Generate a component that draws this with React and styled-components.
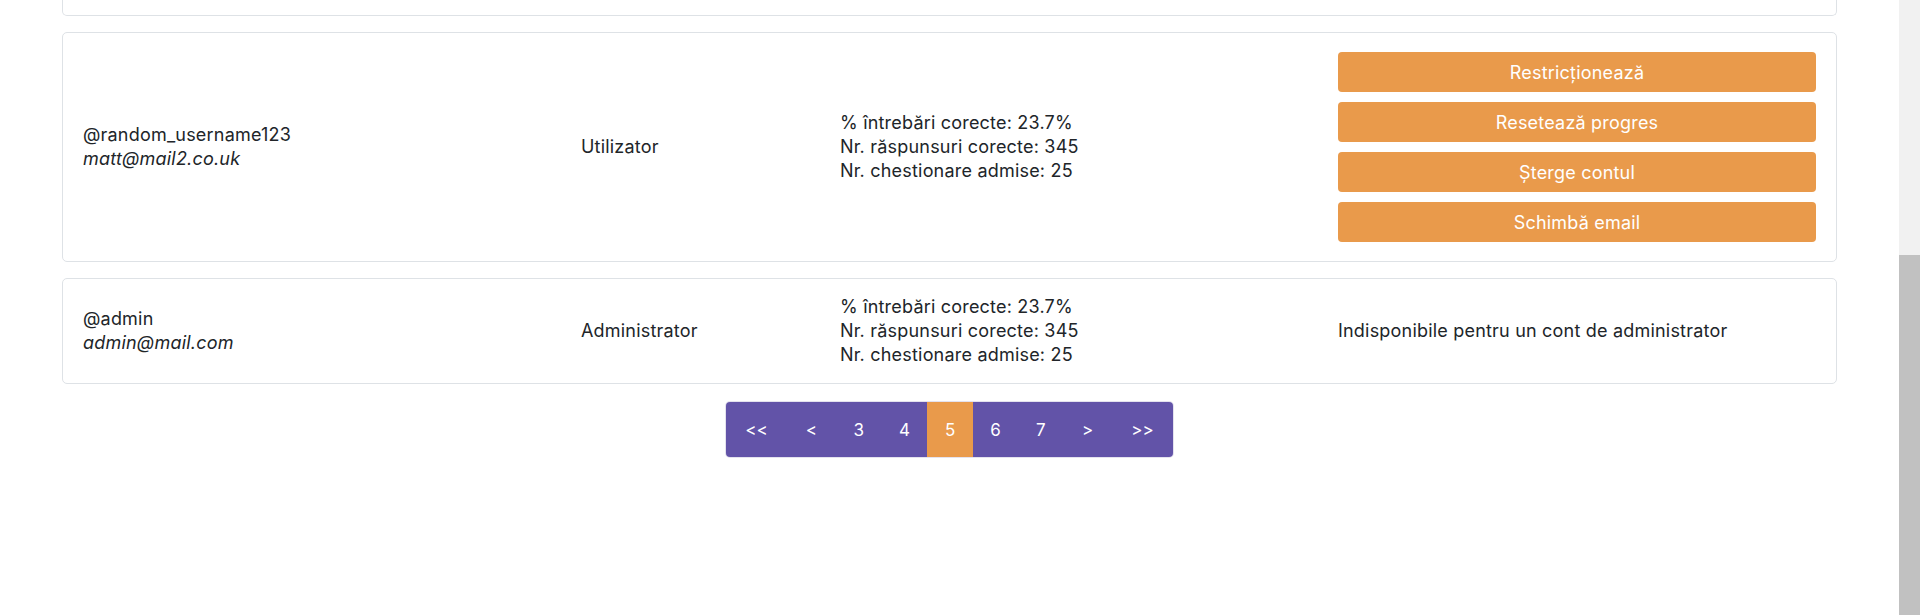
import React from 'react';
import styled, { createGlobalStyle } from 'styled-components';

const GlobalStyle = createGlobalStyle`
  html, body {
    margin: 0;
    padding: 0;
    height: 100%;
    overflow: hidden;
    background: #ffffff;
  }
  body {
    font-family: Inter, "Noto Sans", sans-serif;
    font-size: 18px;
    letter-spacing: 0.2px;
    line-height: 24px;
    color: #212529;
  }
`;

const Page = styled.div`
  display: flex;
  height: 100vh;
`;

const Main = styled.main`
  flex: 1;
  overflow: hidden;
`;

const Container = styled.div`
  margin: 0 62px;
  display: flex;
  flex-direction: column;
  gap: 16px;
`;

// bottom edge of the previous card, the list is scrolled past it
const CardEdge = styled.div`
  height: 15px;
  border: 1px solid #dee2e6;
  border-top: none;
  border-radius: 0 0 5px 5px;
`;

const UserCard = styled.div`
  display: grid;
  grid-template-columns: 2fr 1fr 2fr 2fr;
  gap: 20px;
  align-items: center;
  padding: 16px 20px;
  border: 1px solid #dee2e6;
  border-radius: 5px;
  background: #fff;
`;

const Cell = styled.div`
  display: flex;
  flex-direction: column;
`;

const Email = styled.span`
  font-style: italic;
`;

const Actions = styled.div`
  display: flex;
  flex-direction: column;
  gap: 10px;
  padding: 3px 0;
`;

const ActionButton = styled.button`
  height: 40px;
  border: none;
  border-radius: 4px;
  background: #e99a4b;
  color: #ffffff;
  font-family: inherit;
  font-size: 18px;
  letter-spacing: 0.2px;
  cursor: pointer;
`;

const Nav = styled.nav`
  display: flex;
  justify-content: center;
  margin-top: 2px;
`;

const PageList = styled.ul`
  display: flex;
  margin: 0;
  padding: 0;
  list-style: none;
  height: 55px;
  background: #6253a8;
  border-radius: 4px;
  overflow: hidden;
  box-shadow: 0 0 0 1px #e4e2ee;
`;

const PageItem = styled.li`
  display: flex;
  align-items: center;
  justify-content: center;
  padding: 0 ${(p) => (p.$arrow ? 19 : 17.5)}px;
  background: ${(p) => (p.$active ? '#e99a4b' : 'transparent')};
  color: #ffffff;
  font-size: 17px;
  letter-spacing: 0;
  cursor: pointer;
`;

const ScrollTrack = styled.div`
  width: 21px;
  background: #f1f1f1;
  display: flex;
  flex-direction: column;
`;

const ScrollThumb = styled.div`
  margin-top: 255px;
  flex: 1;
  background: #c1c1c1;
`;

const users = [
  {
    username: '@random_username123',
    email: 'matt@mail2.co.uk',
    role: 'Utilizator',
    admin: false,
  },
  {
    username: '@admin',
    email: 'admin@mail.com',
    role: 'Administrator',
    admin: true,
  },
];

const actions = ['Restricționează', 'Resetează progres', 'Șterge contul', 'Schimbă email'];
const pages = [
  { label: '<<', arrow: true },
  { label: '<', arrow: true },
  { label: '3' },
  { label: '4' },
  { label: '5', active: true },
  { label: '6' },
  { label: '7' },
  { label: '>', arrow: true },
  { label: '>>', arrow: true },
];

const App = () => {
  return (
    <Page>
      <GlobalStyle />
      <Main>
        <Container>
          <CardEdge />
          {users.map((user) => (
            <UserCard key={user.username}>
              <Cell>
                <span>{user.username}</span>
                <Email>{user.email}</Email>
              </Cell>
              <Cell>{user.role}</Cell>
              <Cell>
                <span>% întrebări corecte: 23.7%</span>
                <span>Nr. răspunsuri corecte: 345</span>
                <span>Nr. chestionare admise: 25</span>
              </Cell>
              {user.admin ? (
                <Cell>Indisponibile pentru un cont de administrator</Cell>
              ) : (
                <Actions>
                  {actions.map((a) => (
                    <ActionButton key={a} type="button">
                      {a}
                    </ActionButton>
                  ))}
                </Actions>
              )}
            </UserCard>
          ))}
          <Nav>
            <PageList>
              {pages.map((p) => (
                <PageItem key={p.label} $active={p.active} $arrow={p.arrow}>
                  {p.label}
                </PageItem>
              ))}
            </PageList>
          </Nav>
        </Container>
      </Main>
      <ScrollTrack>
        <ScrollThumb />
      </ScrollTrack>
    </Page>
  );
};

export default App;
